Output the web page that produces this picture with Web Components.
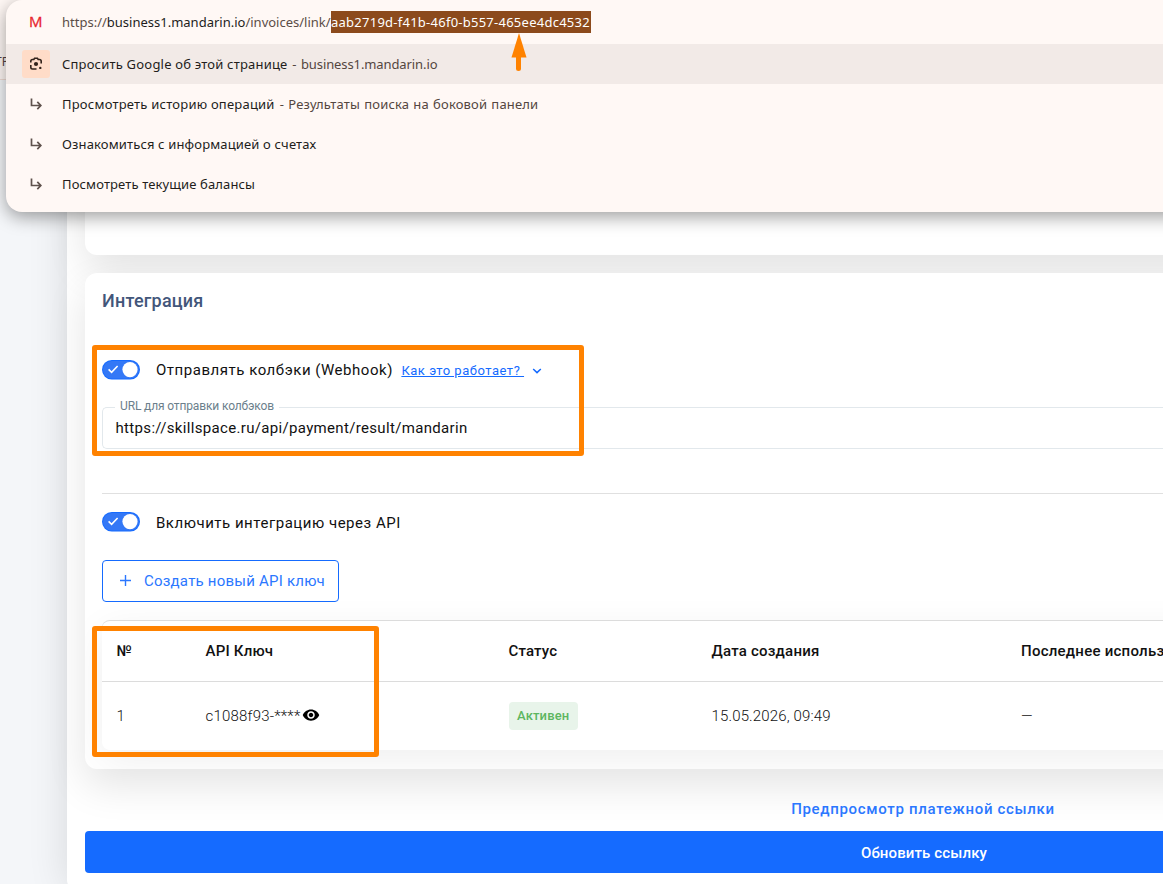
<!DOCTYPE html>
<html lang="ru">
<head>
<meta charset="utf-8">
<title>Интеграция</title>
<style>
html,body{margin:0;height:884px;overflow:hidden;background:#f4f6f9}
body{font-family:Roboto,"Liberation Sans",sans-serif;position:relative}
</style>
</head>
<body>
<invoice-page></invoice-page>
<script>
const define = (name, html) => customElements.define(name, class extends HTMLElement {
  constructor(){ super(); const t=document.createElement('template'); t.innerHTML=html; this.attachShadow({mode:'open'}).append(t.content.cloneNode(true)); }
});

define('toggle-switch', `<style>
:host{display:block;width:38px;height:20px;flex:none}
svg{display:block}
</style><svg width="38" height="20" viewBox="0 0 38 20"><rect width="38" height="19.5" rx="9.75" fill="#156bff"/><rect x="1" y="1" width="36" height="17.5" rx="8.75" fill="#3478f6"/><circle cx="28" cy="9.6" r="7.6" fill="#fff"/><path d="M6.600 9.400l3 2.900 6-6.300" fill="none" stroke="#fff" stroke-width="1.6"/></svg>`);

define('url-field', `<style>
:host{display:block}
fieldset{margin:0;padding:0 0 0 12.500px;box-sizing:border-box;height:49px;border:1px solid #e2e8ec;border-right:0;border-radius:5px 0 0 5px;min-width:0}
legend{margin-left:-.5px;padding:0 5px;font-size:12px;line-height:15px;height:15px;letter-spacing:-.14px;color:#6c7f8c}
legend slot{display:block;margin-top:-1px}
div{font-size:15px;line-height:20px;padding-top:3px;letter-spacing:.33px;color:#111}
</style><fieldset><legend><slot name="label"></slot></legend><div><slot></slot></div></fieldset>`);

define('status-badge', `<style>
:host{display:block;box-sizing:border-box;width:69px;height:28px;line-height:28px;padding-left:8px;border-radius:4px;background:#e8f4ea;color:#5cb660;font-size:13px;font-weight:500;letter-spacing:.15px;margin-left:.5px}
</style><slot></slot>`);

define('key-table', `<style>
:host{display:block;height:130px;box-sizing:border-box;border-top:1px solid #dcdcdc;border-radius:8px 0 0 8px;background:#fff;box-shadow:0 10px 38px rgba(0,0,0,.065);margin-right:-40px}
.row{display:grid;grid-template-columns:89px 303px 203px 309.5px 1fr;padding-left:14.500px;align-items:center;white-space:nowrap;font-size:15px}
.head{height:60px;border-bottom:1px solid #dcdcdc;font-weight:500;color:#111}
.body{height:68px;font-weight:300;color:#111}
.key{display:flex;align-items:center}
svg{margin:-2px 0 0 1.500px;flex:none}
</style>
<div class="row head"><span>№</span><span style="letter-spacing:.2px">API Ключ</span><span style="letter-spacing:.15px">Статус</span><span style="letter-spacing:.22px">Дата создания</span><span style="letter-spacing:.25px">Последнее использование</span></div>
<div class="row body"><span>1</span><div class="key"><span style="letter-spacing:.2px">c1088f93-****</span><svg width="18" height="18" viewBox="0 0 24 24"><path d="M12 4.5C7 4.5 2.73 7.61 1 12c1.73 4.39 6 7.5 11 7.5s9.270-3.110 11-7.500c-1.730-4.390-6-7.500-11-7.500zM12 17c-2.760 0-5-2.240-5-5s2.240-5 5-5 5 2.240 5 5-2.240 5-5 5zm0-8c-1.660 0-3 1.340-3 3s1.340 3 3 3 3-1.340 3-3-1.340-3-3-3z"/></svg></div><status-badge>Активен</status-badge><span style="letter-spacing:.15px">15.05.2026, 09:49</span><span>—</span></div>`);

define('integration-card', `<style>
:host{display:block;box-sizing:border-box;height:496px;overflow:hidden;background:#fff;border-radius:12px 0 0 12px;padding:17px 0 0 17px}
h2{margin:0;font-size:18px;line-height:22px;font-weight:500;color:#42567a;letter-spacing:.22px}
.line{display:flex;align-items:center;height:24px;font-size:15px;color:#111;white-space:nowrap}
.line toggle-switch{margin-right:16px}
.api toggle-switch{margin-top:-2px}
.hook{margin-top:46px}
.how{font-size:13px;color:#156bff;letter-spacing:.52px;text-decoration:underline;white-space:pre;margin:1px 0 0 8.500px}
.chev{margin:2px 0 0 8px}
url-field{margin-top:18px}
hr{border:0;height:1px;background:#e0e0e0;margin:44px 0 17px}
.create{display:flex;align-items:center;box-sizing:border-box;width:237px;height:42px;margin:25px 0 18px;padding:0 0 0 17px;border:1px solid #156bff;border-radius:4px;background:#fff;color:#2b77ff;font:400 15px Roboto,sans-serif;letter-spacing:.22px;white-space:nowrap}
.create svg{margin-right:12px;flex:none}
</style>
<h2>Интеграция</h2>
<div class="line hook"><toggle-switch></toggle-switch><span style="letter-spacing:.53px">Отправлять колбэки (Webhook)</span><span class="how">Как это работает? </span><svg class="chev" width="10" height="8" viewBox="0 0 10 8"><path d="M1.200 2l3.800 3.600L8.800 2" fill="none" stroke="#156bff" stroke-width="1.500"/></svg></div>
<url-field><span slot="label">URL для отправки колбэков</span>https://skillspace.ru/api/payment/result/mandarin</url-field>
<hr>
<div class="line api"><toggle-switch></toggle-switch><span style="letter-spacing:.52px">Включить интеграцию через API</span></div>
<button class="create"><svg width="12" height="12" viewBox="0 0 12 12"><path d="M5.500 0v11M0 5.500h11" stroke="#2b77ff" stroke-width="1.400"/></svg>Создать новый API ключ</button>
<key-table></key-table>`);

define('omnibox-row', `<style>
:host{display:flex;height:40px;align-items:center;padding-left:16px;font-size:13px;color:#221d1b;white-space:pre;letter-spacing:.2px}
:host([active]){background:#f2eae7}
.icon{width:28px;height:28px;margin-right:12px;display:flex;align-items:center;justify-content:center;border-radius:3px;flex:none}
:host([active]) .icon{background:#ffdcc8}
</style><span class="icon"><slot name="icon"></slot></span><slot></slot>`);

const arrow = '<svg slot="icon" width="12" height="13" viewBox="0 0 12 13"><path d="M1.500 .5v7H10M7.300 3.900L10.800 7.500 7.300 11.100" fill="none" stroke="#5e514c" stroke-width="1.700"/></svg>';
define('omnibox-menu', `<style>
:host{display:block;box-sizing:border-box;height:212px;background:#fff8f5;border-radius:16px 0 0 16px;box-shadow:0 5px 18px rgba(0,0,0,.38);font-family:"Noto Sans","Open Sans",sans-serif}
.url{display:flex;align-items:center;height:44px;font-size:13px;white-space:nowrap;color:#5b4d47}
.m{width:56px;box-sizing:border-box;padding:0 0 2px 23px;font:400 15px "Open Sans";color:#e8252f;-webkit-text-stroke:.3px #e8252f}
.url b{font-weight:400;color:#221d1b}
.sel{background:#8c4a1c;color:#fff;height:22px;line-height:22px;width:260px;letter-spacing:.25px}
i{font-style:normal;color:#54463f}
</style>
<div class="url"><span class="m">M</span><span style="width:269px" class="addr">https://<b>business1.mandarin.io</b>/invoices/link/</span><span class="sel">aab2719d-f41b-46f0-b557-465ee4dc4532</span></div>
<omnibox-row active><svg slot="icon" width="14" height="14" viewBox="0 0 14 14"><path d="M1.800 5.500V4.200Q1.800 2.500 3.500 2.500H4.800L5.600 1.300H8.400L9.200 2.500H10.500Q12.200 2.500 12.200 4.200V6.500M1.800 8V10.300Q1.800 12 3.500 12H7.500" fill="none" stroke="#33231b" stroke-width="1.600"/><circle cx="7" cy="7" r="2.100" fill="#33231b"/><circle cx="11.300" cy="10.900" r="1.200" fill="#33231b"/></svg><span>Спросить Google об этой странице</span><i style="letter-spacing:-.1px;word-spacing:1.400px"> - business1.mandarin.io</i></omnibox-row>
<omnibox-row>${arrow}<span style="letter-spacing:.22px">Просмотреть историю операций</span><i style="margin-left:1px;letter-spacing:.17px;word-spacing:.6px"> - Результаты поиска на боковой панели</i></omnibox-row>
<omnibox-row>${arrow}<span style="letter-spacing:.15px">Ознакомиться с информацией о счетах</span></omnibox-row>
<omnibox-row>${arrow}<span style="letter-spacing:.13px">Посмотреть текущие балансы</span></omnibox-row>`);

define('invoice-page', `<style>
:host{display:flex;height:884px;position:relative;overflow:hidden}
aside{width:67px;flex:none;background:#f4f6f9}
.chrome{height:79px;background:#fff8f5;border-bottom:1px solid #f0ddd5;overflow:hidden;font:12px/16px "Noto Sans",sans-serif;color:#544}
.chrome span{display:block;margin:54px 0 0 -5px}
main{position:relative;flex:1;min-width:0;height:890px;box-sizing:border-box;padding-left:18px;background:#fff;border-radius:0 0 0 10px;box-shadow:0 0 40px rgba(0,0,0,.12);display:flex;flex-direction:column}
.stack{display:flex;flex-direction:column;gap:18px}
.top{height:255px;background:#fff;border-radius:0 0 0 12px}
.top,integration-card{box-shadow:0 16px 40px rgba(0,0,0,.11);margin-right:-60px}
integration-card,.top{position:relative}
.preview{width:1676px;height:20px;line-height:20px;margin:30px 0 12px;font-size:15px;font-weight:500;letter-spacing:.69px;color:#2b77ff;text-align:center;position:relative}
.save{display:block;border:0;width:1678px;height:42px;flex:none;border-radius:4px;background:#156bff;color:#fff;font:500 15px Roboto,sans-serif;letter-spacing:.13px;padding:1px 0 0;position:relative}
omnibox-menu{position:absolute;left:6px;top:0;width:1220px}
.mark{position:absolute;box-sizing:border-box;border:5px solid #ff8200;border-radius:3px}
.pointer{position:absolute;left:511px;top:33px}
</style>
<aside><div class="chrome"><span>ТР</span></div></aside>
<main><div class="stack"><div class="top"></div><integration-card></integration-card></div><div class="preview">Предпросмотр платежной ссылки</div><button class="save">Обновить ссылку</button></main>
<omnibox-menu></omnibox-menu>
<div class="mark" style="left:92px;top:345px;width:492px;height:111px"></div>
<div class="mark" style="left:92px;top:626px;width:287px;height:131px"></div>
<svg class="pointer" width="16" height="39" viewBox="0 0 16 39"><path d="M8 0l7.500 24.500H.5z" fill="#ff8200"/><path d="M7.500 23v12.500" stroke="#ff8200" stroke-width="5" stroke-linecap="round"/></svg>`);
</script>
</body>
</html>
